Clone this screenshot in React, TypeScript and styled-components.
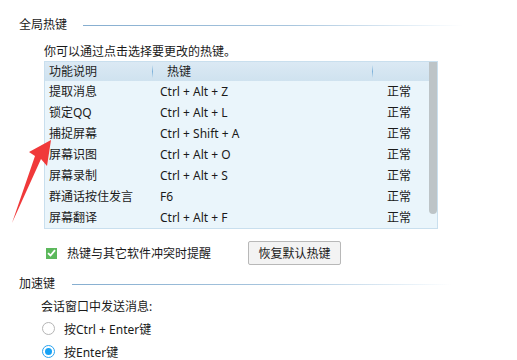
import styled, { createGlobalStyle } from "styled-components";

const GlobalStyle = createGlobalStyle`
  html, body {
    margin: 0;
    padding: 0;
    background: #ffffff;
  }
  body {
    font-family: "Noto Sans", "Noto Sans CJK SC", sans-serif;
    font-size: 12px;
    color: #1a1a1a;
  }
`;

const Page = styled.div`
  position: relative;
  width: 517px;
  height: 360px;
  overflow: hidden;
  padding: 17px 0 0 19px;
  box-sizing: border-box;
`;

const SectionHead = styled.div<{ $lineStart: number; $gap?: number }>`
  display: flex;
  align-items: center;
  height: 16px;
  line-height: 16px;
  margin-top: ${(p) => p.$gap ?? 0}px;

  span {
    width: ${(p) => p.$lineStart}px;
    flex: none;
  }

  &::after {
    content: "";
    width: 380px;
    height: 1px;
    background: linear-gradient(to right, #86aed0 0%, #a9c6de 55%, rgba(220, 234, 245, 0.6) 90%, rgba(255, 255, 255, 0) 100%);
  }
`;

const Body = styled.div<{ $left: number }>`
  padding-left: ${(p) => p.$left}px;
`;

const Hint = styled.div`
  margin-top: 11px;
  height: 16px;
  line-height: 16px;
`;

const Table = styled.div`
  position: relative;
  margin-top: 1px;
  width: 394px;
  height: 168px;
  box-sizing: border-box;
  border: 1px solid #c9dfee;
  background: #eaf5fb;
  overflow: hidden;
`;

const HeaderRow = styled.div`
  display: grid;
  grid-template-columns: 108px 220px 1fr;
  height: 19px;
  line-height: 19px;
  background: linear-gradient(to bottom, #dbe9f4, #cfe2ef);
`;

const HeadCell = styled.div<{ $pad: number; $sep?: boolean }>`
  padding-left: ${(p) => p.$pad}px;
  position: relative;
  color: #1f1f1f;

  &::after {
    content: "";
    display: ${(p) => (p.$sep ? "block" : "none")};
    position: absolute;
    right: 0;
    top: 3px;
    width: 1px;
    height: 13px;
    background: linear-gradient(to bottom, rgba(120, 170, 210, 0), #7eb2da, rgba(120, 170, 210, 0));
  }
`;

const Row = styled.div`
  display: grid;
  grid-template-columns: 111px 227px 1fr;
  height: 21px;
  line-height: 21px;
  padding-left: 4px;
`;

const Cell = styled.div`
  white-space: nowrap;
`;

const ScrollThumb = styled.div`
  position: absolute;
  right: 0;
  top: 0;
  width: 8px;
  height: 152px;
  background: #bdc4c7;
  border-radius: 0 0 4px 4px;
`;

const OptionLine = styled.div`
  display: flex;
  align-items: center;
  margin-top: 12px;
  height: 24px;
`;

const Check = styled.div`
  width: 11px;
  height: 11px;
  margin-left: 2px;
  background: #5cb85c;
  display: flex;
  align-items: center;
  justify-content: center;
  flex: none;
`;

const CheckLabel = styled.span`
  margin-left: 10px;
  width: 181px;
`;

const Button = styled.button`
  font: inherit;
  color: #1a1a1a;
  width: 93px;
  height: 24px;
  padding: 0;
  border: 1px solid #b8b8b8;
  border-radius: 2px;
  background: #f3f3f3;
`;

const SubLabel = styled.div`
  margin-top: 6px;
  height: 18px;
  line-height: 18px;
`;

const RadioLine = styled.div`
  display: flex;
  align-items: center;
  height: 21px;
  margin-top: 2px;
`;

const Radio = styled.div<{ $on?: boolean }>`
  width: 11px;
  height: 11px;
  border-radius: 50%;
  border: 1px solid ${(p) => (p.$on ? "#2aa3ef" : "#b5b5b5")};
  background: #fff;
  margin-left: 1px;
  display: flex;
  align-items: center;
  justify-content: center;
  flex: none;

  &::after {
    content: "";
    display: ${(p) => (p.$on ? "block" : "none")};
    width: 7px;
    height: 7px;
    border-radius: 50%;
    background: #17a2f5;
  }
`;

const RadioLabel = styled.span`
  margin-left: 9px;
`;

const Arrow = styled.svg`
  position: absolute;
  left: 0;
  top: 0;
  pointer-events: none;
`;

const rows = [
  ["提取消息", "Ctrl + Alt + Z"],
  ["锁定QQ", "Ctrl + Alt + L"],
  ["捕捉屏幕", "Ctrl + Shift + A"],
  ["屏幕识图", "Ctrl + Alt + O"],
  ["屏幕录制", "Ctrl + Alt + S"],
  ["群通话按住发言", "F6"],
  ["屏幕翻译", "Ctrl + Alt + F"],
];

export default function App() {
  return (
    <>
      <GlobalStyle />
      <Page>
        <SectionHead $lineStart={64}>
          <span>全局热键</span>
        </SectionHead>
        <Body $left={25}>
          <Hint>你可以通过点击选择要更改的热键。</Hint>
          <Table>
            <HeaderRow>
              <HeadCell $pad={4} $sep>功能说明</HeadCell>
              <HeadCell $pad={14} $sep>热键</HeadCell>
              <HeadCell $pad={0} />
            </HeaderRow>
            {rows.map(([name, key]) => (
              <Row key={name}>
                <Cell>{name}</Cell>
                <Cell>{key}</Cell>
                <Cell>正常</Cell>
              </Row>
            ))}
            <ScrollThumb />
          </Table>
          <OptionLine>
            <Check>
              <svg width="9" height="8" viewBox="0 0 9 8">
                <path d="M1 4.2 L3.5 6.5 L8 1.2" fill="none" stroke="#fff" strokeWidth="1.8" />
              </svg>
            </Check>
            <CheckLabel>热键与其它软件冲突时提醒</CheckLabel>
            <Button>恢复默认热键</Button>
          </OptionLine>
        </Body>
        <SectionHead $lineStart={53} $gap={11}>
          <span>加速键</span>
        </SectionHead>
        <Body $left={22}>
          <SubLabel>会话窗口中发送消息:</SubLabel>
          <RadioLine>
            <Radio />
            <RadioLabel>按Ctrl + Enter键</RadioLabel>
          </RadioLine>
          <RadioLine>
            <Radio $on />
            <RadioLabel>按Enter键</RadioLabel>
          </RadioLine>
        </Body>
        <Arrow width="517" height="360" viewBox="0 0 517 360">
          <polygon points="51,140 47,166 41,159 12,223 35,156 29,152" fill="#f0393a" />
        </Arrow>
      </Page>
    </>
  );
}
